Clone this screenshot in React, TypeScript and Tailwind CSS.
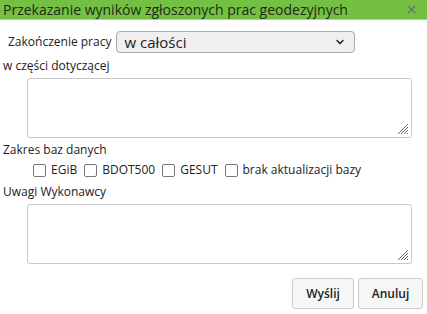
import { ChevronDown, X } from 'lucide-react';

function Checkbox({ label }: { label: string }) {
  return (
    <label className="flex items-center gap-[5px]">
      <span className="w-[13px] h-[13px] border border-[#777] rounded-[2px] bg-white" />
      <span>{label}</span>
    </label>
  );
}

function Area() {
  return (
    <div className="relative ml-[24px] w-[385px] h-[60px] border border-[#c8c8c8] rounded-[3px] bg-white">
      <svg className="absolute right-[2px] bottom-[2px]" width="12" height="12" viewBox="0 0 12 12">
        <path d="M11 1L1 11M11 4L4 11M11 7L7 11M11 10L10 11" stroke="#666" strokeWidth="1" />
      </svg>
    </div>
  );
}

export default function App() {
  return (
    <main className="w-[427px] h-[314px] bg-white text-[#222] text-[12px] font-['Open_Sans',sans-serif] overflow-hidden">
      <div className="h-[20px] bg-[#74c043] flex items-center justify-between pl-[3px] pr-[9px] border-b border-[#a9d88a]">
        <h1 className="text-[14px] leading-none text-[#1f2a1a]">Przekazanie wyników zgłoszonych prac geodezyjnych</h1>
        <X className="w-[13px] h-[13px] text-[#5b7a55]" strokeWidth={2.5} />
      </div>

      <div className="px-[3px]">
        <div className="flex items-center gap-[5px] pl-[5px] mt-[11px]">
          <span>Zakończenie pracy</span>
          <div className="w-[239px] h-[22px] border border-[#aaa] rounded-[4px] bg-[#efefef] flex items-center justify-between pl-[7px] pr-[8px]">
            <span className="text-[15px]">w całości</span>
            <ChevronDown className="w-[12px] h-[12px]" strokeWidth={3} />
          </div>
        </div>

        <div className="mt-[4px] mb-[3px]">w części dotyczącej</div>
        <Area />

        <div className="mt-[3px]">Zakres baz danych</div>
        <div className="flex items-center gap-[7px] pl-[30px] mt-[2px]">
          <Checkbox label="EGiB" />
          <Checkbox label="BDOT500" />
          <Checkbox label="GESUT" />
          <Checkbox label="brak aktualizacji bazy" />
        </div>
        <div className="mt-[4px] mb-[3px]">Uwagi Wykonawcy</div>
        <Area />

        <div className="flex justify-end gap-[4px] mt-[14px] pr-[1px]">
          <button className="w-[62px] h-[31px] border border-[#ccc] rounded-[3px] bg-[#f6f6f6] font-semibold">Wyślij</button>
          <button className="w-[65px] h-[31px] border border-[#ccc] rounded-[3px] bg-[#f6f6f6] font-semibold">Anuluj</button>
        </div>
      </div>
    </main>
  );
}
